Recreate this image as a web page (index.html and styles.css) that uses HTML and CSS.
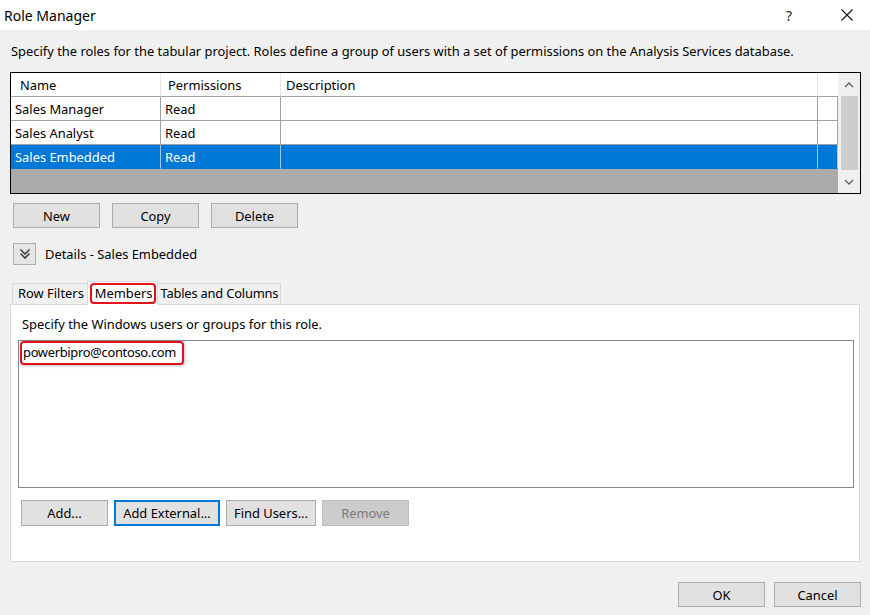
FILE: index.html
```html
<!DOCTYPE html>
<html>
<head>
<meta charset="utf-8">
<title>Role Manager</title>
<link rel="stylesheet" href="styles.css">
</head>
<body>
<div class="dialog">
  <div class="titlebar">
    <div class="title">Role Manager</div>
    <div class="help">?</div>
    <div class="close">
      <svg width="12" height="12" viewBox="0 0 12 12"><path d="M0.5 0.5L11.5 11.5M11.5 0.5L0.5 11.5" stroke="#111" stroke-width="1.1" fill="none"/></svg>
    </div>
  </div>
  <div class="body">
    <p class="intro">Specify the roles for the tabular project. Roles define a group of users with a set of permissions on the Analysis Services database.</p>
    <div class="grid">
      <div class="table">
        <div class="row head">
          <div class="cell c1">Name</div>
          <div class="cell c2">Permissions</div>
          <div class="cell c3">Description</div>
          <div class="cell c4"></div>
        </div>
        <div class="row">
          <div class="cell c1">Sales Manager</div>
          <div class="cell c2">Read</div>
          <div class="cell c3"></div>
          <div class="cell c4"></div>
        </div>
        <div class="row">
          <div class="cell c1">Sales Analyst</div>
          <div class="cell c2">Read</div>
          <div class="cell c3"></div>
          <div class="cell c4"></div>
        </div>
        <div class="row sel">
          <div class="cell c1">Sales Embedded</div>
          <div class="cell c2">Read</div>
          <div class="cell c3"></div>
          <div class="cell c4"></div>
        </div>
        <div class="filler"></div>
      </div>
      <div class="vscroll">
        <div class="arrow">
          <svg width="10" height="6" viewBox="0 0 10 6"><path d="M1 5L5 1L9 5" stroke="#606060" stroke-width="1.3" fill="none"/></svg>
        </div>
        <div class="thumb"></div>
        <div class="arrow">
          <svg width="10" height="6" viewBox="0 0 10 6"><path d="M1 1L5 5L9 1" stroke="#606060" stroke-width="1.3" fill="none"/></svg>
        </div>
      </div>
    </div>

    <div class="btnrow">
      <button class="btn">New</button>
      <button class="btn">Copy</button>
      <button class="btn">Delete</button>
    </div>

    <div class="details">
      <div class="toggle">
        <svg width="14" height="14" viewBox="0 0 14 14"><path d="M2.5 2.5L7 7L11.5 2.5M2.5 6.5L7 11L11.5 6.5" stroke="#444" stroke-width="1.6" fill="none"/></svg>
      </div>
      <span>Details - Sales Embedded</span>
    </div>

    <div class="tabs">
      <div class="tab">Row Filters</div>
      <div class="tab sel"><span class="hl">Members</span></div>
      <div class="tab">Tables and Columns</div>
    </div>
    <div class="panel">
      <p class="ptext">Specify the Windows users or groups for this role.</p>
      <div class="listbox">
        <span class="member">powerbipro@contoso.com</span>
      </div>
      <div class="pbtns">
        <button class="btn b-add">Add...</button>
        <button class="btn b-ext focus">Add External...</button>
        <button class="btn b-find">Find Users...</button>
        <button class="btn b-rem disabled">Remove</button>
      </div>
    </div>

    <div class="footer">
      <button class="btn">OK</button>
      <button class="btn">Cancel</button>
    </div>
  </div>
</div>
</body>
</html>
```

FILE: styles.css
```css
* { box-sizing: border-box; }
html, body { margin: 0; padding: 0; }
body {
  width: 870px;
  height: 615px;
  overflow: hidden;
  background: #f0f0f0;
  font-family: "Noto Sans", "Open Sans", sans-serif;
  font-size: 12.9px;
  color: #000;
}
.dialog { width: 870px; height: 615px; }

.titlebar {
  height: 30px;
  background: #fff;
  display: flex;
  align-items: center;
}
.title { flex: 1; padding-left: 4px; font-size: 14px; }
.help { width: 14px; font-size: 14px; margin-right: 41px; color: #222; }
.close { width: 12px; height: 12px; margin-right: 17px; display: flex; }

.body { padding: 0 9px 0 10px; }

.intro {
  margin: 13px 0 13px 1px;
  line-height: 16px;
  white-space: nowrap;
}

.grid {
  width: 851px;
  height: 122px;
  border: 1px solid #000;
  display: flex;
  background: #fff;
}
.table { width: 827px; display: flex; flex-direction: column; }
.row { display: flex; height: 24px; }
.cell {
  height: 24px;
  line-height: 24px;
  border-right: 1px solid #a0a0a0;
  border-bottom: 1px solid #a0a0a0;
  padding-left: 4px;
  white-space: nowrap;
  overflow: hidden;
}
.c1 { width: 150px; }
.c2 { width: 120px; }
.c3 { width: 537px; }
.c4 { width: 20px; }
.head .cell { border-right-color: #e5e5e5; border-bottom-color: #a0a0a0; }
.head .c1 { padding-left: 9px; }
.head .c2 { padding-left: 7px; }
.head .c3 { padding-left: 5px; }
.head .c4 { border-right: none; }
.sel .cell { background: #0078d7; color: #fff; border-bottom-color: #0078d7; border-right-color: #9ec8ee; }
.filler { flex: 1; background: #ababab; }

.vscroll {
  width: 22px;
  background: #f0f0f0;
  display: flex;
  flex-direction: column;
  align-items: center;
}
.arrow { height: 23px; display: flex; align-items: center; justify-content: center; width: 100%; }
.thumb { width: 17px; flex: 1; background: #cdcdcd; }

.btn {
  font-family: inherit;
  font-size: 12.9px;
  color: #000;
  background: #e1e1e1;
  border: 1px solid #adadad;
  width: 87px;
  height: 25px;
  padding: 0;
  margin: 0;
  line-height: 22px;
}

.btnrow { display: flex; gap: 12px; margin: 9px 0 0 3px; }
.btnrow .btn { width: 87px; }

.details {
  display: flex;
  align-items: center;
  margin: 15px 0 0 3px;
  gap: 9px;
  height: 22px;
}
.toggle {
  width: 23px;
  height: 22px;
  background: #e5e5e5;
  border: 1px solid #adadad;
  display: flex;
  align-items: center;
  justify-content: center;
}

.tabs {
  display: flex;
  align-items: flex-end;
  margin: 15px 0 0 2px;
  height: 24px;
}
.tab {
  height: 21px;
  line-height: 19px;
  border: 1px solid #d9d9d9;
  border-bottom: none;
  background: #f0f0f0;
  padding: 0 4px 0 5px;
  white-space: nowrap;
}
.tab.sel {
  height: 24px;
  background: #fff;
  margin: 0 -1px -1px -2px;
  padding: 1px 1px 0 2px;
  position: relative;
  z-index: 1;
  line-height: 17px;
}
.tab.sel + .tab { padding: 0 2px 0 3px; letter-spacing: -0.2px; }
.hl {
  display: inline-block;
  border: 2px solid #e4101a;
  border-radius: 4px;
  padding: 0 1px 0 3px;
  height: 21px;
  line-height: 17px;
}

.panel {
  width: 850px;
  height: 258px;
  background: #fff;
  border: 1px solid #d9d9d9;
  padding: 0;
}
.ptext {
  margin: 11px 0 0 11px;
  line-height: 16px;
}
.listbox {
  margin: 8px 0 0 7px;
  width: 836px;
  height: 148px;
  border: 1px solid #828790;
  padding: 0 1px;
}
.member {
  display: inline-block;
  height: 24px;
  line-height: 19px;
  border: 2px solid #e4101a;
  border-radius: 4px;
  padding: 0 6px 0 1px;
  letter-spacing: -0.3px;
  box-shadow: 1px 1px 3px rgba(0,0,0,0.25);
}
.pbtns { display: flex; gap: 6px; margin: 12px 0 0 10px; }
.pbtns .btn { height: 26px; }
.b-add { width: 87px; }
.pbtns .b-ext { width: 106px; border: 2px solid #0078d7; }
.b-find { width: 90px; }
.b-rem { width: 87px; }
.btn.disabled { background: #cccccc; border-color: #bfbfbf; color: #7a7a7a; }

.footer {
  display: flex;
  justify-content: flex-end;
  gap: 9px;
  margin-top: 20px;
}
```
